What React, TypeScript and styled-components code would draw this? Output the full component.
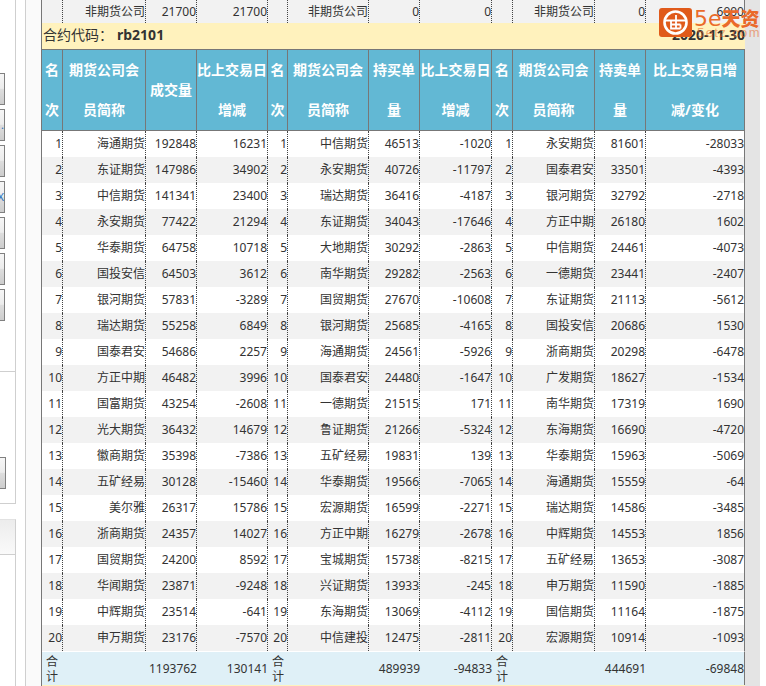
import React from 'react';
import styled, { createGlobalStyle } from 'styled-components';

const GlobalStyle = createGlobalStyle`
  html, body {
    margin: 0;
    padding: 0;
    background: #fff;
    overflow: hidden;
  }
`;

const widths = [21, 83, 51, 71, 20, 81, 51, 72, 21, 82, 51, 99];

const headers = [
  ['名', '次'],
  ['期货公司会', '员简称'],
  ['成交量'],
  ['比上交易日', '增减'],
  ['名', '次'],
  ['期货公司会', '员简称'],
  ['持买单', '量'],
  ['比上交易日', '增减'],
  ['名', '次'],
  ['期货公司会', '员简称'],
  ['持卖单', '量'],
  ['比上交易日增', '减/变化'],
];

const topRow = ['', '非期货公司', '21700', '21700', '', '非期货公司', '0', '0', '', '非期货公司', '0', '6000'];

const rows = [
  '海通期货,192848,16231,中信期货,46513,-1020,永安期货,81601,-28033',
  '东证期货,147986,34902,永安期货,40726,-11797,国泰君安,33501,-4393',
  '中信期货,141341,23400,瑞达期货,36416,-4187,银河期货,32792,-2718',
  '永安期货,77422,21294,东证期货,34043,-17646,方正中期,26180,1602',
  '华泰期货,64758,10718,大地期货,30292,-2863,中信期货,24461,-4073',
  '国投安信,64503,3612,南华期货,29282,-2563,一德期货,23441,-2407',
  '银河期货,57831,-3289,国贸期货,27670,-10608,东证期货,21113,-5612',
  '瑞达期货,55258,6849,银河期货,25685,-4165,国投安信,20686,1530',
  '国泰君安,54686,2257,海通期货,24561,-5926,浙商期货,20298,-6478',
  '方正中期,46482,3996,国泰君安,24480,-1647,广发期货,18627,-1534',
  '国富期货,43254,-2608,一德期货,21515,171,南华期货,17319,1690',
  '光大期货,36432,14679,鲁证期货,21266,-5324,东海期货,16690,-4720',
  '徽商期货,35398,-7386,五矿经易,19831,139,华泰期货,15963,-5069',
  '五矿经易,30128,-15460,华泰期货,19566,-7065,海通期货,15559,-64',
  '美尔雅,26317,15786,宏源期货,16599,-2271,瑞达期货,14586,-3485',
  '浙商期货,24357,14027,方正中期,16279,-2678,中辉期货,14553,1856',
  '国贸期货,24200,8592,宝城期货,15738,-8215,五矿经易,13653,-3087',
  '华闻期货,23871,-9248,兴证期货,13933,-245,申万期货,11590,-1885',
  '中辉期货,23514,-641,东海期货,13069,-4112,国信期货,11164,-1875',
  '申万期货,23176,-7570,中信建投,12475,-2811,宏源期货,10914,-1093',
].map((r) => r.split(','));

const totals = ['合计', '', '1193762', '130141', '合计', '', '489939', '-94833', '合计', '', '444691', '-69848'];

const sideButtons = ['', '.', '', 'X', '', '', ''];

const Page = styled.div`
  position: relative;
  display: flex;
  width: 766px;
  height: 686px;
  overflow: hidden;
  background: #fff;
  font-family: "Noto Sans", "Noto Sans CJK SC", sans-serif;
  font-size: 12px;
  color: #333;
`;

const Sidebar = styled.aside`
  display: flex;
  flex: 0 0 41px;
  height: 100%;
`;

const SideColumn = styled.div`
  display: flex;
  flex-direction: column;
  flex: 0 0 16px;
`;

const Gutter = styled.div`
  flex: 0 0 10px;
  box-sizing: border-box;
  border-right: 1px solid #cfcfcf;
`;

const Stripe = styled.div`
  flex: 1;
  background: #fafafa;
`;

const ButtonStack = styled.div`
  display: flex;
  flex-direction: column;
  gap: 4px;
  box-sizing: border-box;
  height: 372px;
  padding-top: 73px;
  border-right: 1px solid #cfcfcf;
  border-bottom: 1px solid #cfcfcf;
`;

const LowerPanel = styled.div`
  box-sizing: border-box;
  height: 132px;
  padding-top: 85px;
  border-right: 1px solid #cfcfcf;
  border-bottom: 1px solid #cfcfcf;
`;

const SideButton = styled.div<{ $wide?: boolean }>`
  display: flex;
  align-items: center;
  justify-content: flex-end;
  box-sizing: border-box;
  width: ${(p) => (p.$wide ? '6px' : '5px')};
  height: 32px;
  overflow: hidden;
  border: 1px solid #808080;
  border-left: 0;
  background: linear-gradient(#f6f6f6 0%, #ececec 48%, #dedede 50%, #cdcdcd 100%);
  color: #1f6fc0;
  font-size: 11px;
  line-height: 12px;
`;

const SideTab = styled.div`
  box-sizing: border-box;
  height: 36px;
  margin-top: 15px;
  border-right: 1px solid #cfcfcf;
  border-bottom: 1px solid #cfcfcf;
  border-top: 1px solid #e2e2e2;
  background: linear-gradient(#ececec, #fafafa);
`;

const SideRest = styled.div`
  flex: 1;
  border-right: 1px solid #cfcfcf;
`;

const Main = styled.main`
  flex: 0 0 704px;
  box-sizing: border-box;
  height: 100%;
  overflow: hidden;
  border-left: 1px solid #777;
`;

const Scrollbar = styled.div`
  flex: 0 0 15px;
  background: #e4e4e4;
`;

const Table = styled.table`
  width: 703px;
  table-layout: fixed;
  border-collapse: separate;
  border-spacing: 0;
`;

const Row = styled.tr<{ $tone: 'white' | 'grey' }>`
  height: 26px;
  background: ${(p) => (p.$tone === 'grey' ? '#f2f2f2' : '#fff')};
`;

const TopRow = styled.tr`
  height: 23px;
  background: #f2f2f2;
`;

const Cell = styled.td`
  box-sizing: border-box;
  padding: 0;
  border-right: 1px dotted #444;
  text-align: right;
  white-space: nowrap;
  line-height: 16px;

  &:last-child {
    border-right: 1px solid #777;
  }
`;

const TitleRow = styled.tr`
  height: 26px;
  background: #fff2bd;
`;

const TitleCell = styled.td`
  padding: 0;
  font-size: 14px;
  line-height: 20px;
`;

const TitleBar = styled.div`
  display: flex;
  justify-content: space-between;
  padding-left: 1px;
  padding-bottom: 2px;
`;

const Code = styled.b`
  font-weight: 700;
  margin-left: 4px;
`;

const DateLabel = styled.b`
  font-weight: 700;
`;

const HeadCell = styled.th`
  box-sizing: border-box;
  padding: 0;
  height: 82px;
  background: #62b8d4;
  border-top: 1px solid #777;
  border-bottom: 1px solid #777;
  border-right: 1px solid #777;
  color: #fff;
  font-size: 14px;
  font-weight: 700;
  line-height: 40px;
  text-align: center;
  white-space: nowrap;
`;

const TotalRow = styled.tr`
  height: 34px;
  background: #dff0f7;
`;

const TotalCell = styled.td<{ $label?: boolean }>`
  box-sizing: border-box;
  padding: ${(p) => (p.$label ? '1px 0 0 4px' : '0')};
  border-top: 1px solid #fff;
  text-align: ${(p) => (p.$label ? 'left' : 'right')};
  white-space: ${(p) => (p.$label ? 'normal' : 'nowrap')};
  line-height: ${(p) => (p.$label ? '15px' : '16px')};

  &:last-child {
    border-right: 1px solid #777;
  }
`;

const Logo = styled.div`
  position: absolute;
  top: 8px;
  left: 659px;
  display: flex;
  gap: 2px;
`;

const LogoMark = styled.svg`
  display: block;
  width: 33px;
  height: 29px;
`;

const LogoText = styled.div`
  display: flex;
  flex-direction: column;
  color: #ea6a2a;
`;

const LogoName = styled.div`
  display: flex;
  align-items: baseline;
  height: 19px;
  font-family: "DejaVu Sans", sans-serif;
  font-size: 22px;
  line-height: 19px;

  b {
    font-family: "Noto Sans CJK SC", sans-serif;
    font-size: 19px;
    font-weight: 900;
  }
`;

const LogoUrl = styled.div`
  margin-left: 3px;
  font-family: "Liberation Sans", sans-serif;
  font-size: 13px;
  line-height: 11px;
  letter-spacing: 1.4px;
  opacity: 0.55;
`;

const App = () => {
  return (
    <Page>
      <GlobalStyle />
      <Sidebar>
        <SideColumn>
          <ButtonStack>
            {sideButtons.map((glyph, i) => (
              <SideButton key={i}>{glyph}</SideButton>
            ))}
          </ButtonStack>
          <LowerPanel>
            <SideButton $wide />
          </LowerPanel>
          <SideTab />
          <SideRest />
        </SideColumn>
        <Gutter />
        <Stripe />
      </Sidebar>
      <Main>
        <Table>
          <colgroup>
            {widths.map((w, i) => (
              <col key={i} width={w} />
            ))}
          </colgroup>
          <tbody>
            <TopRow>
              {topRow.map((v, i) => (
                <Cell key={i}>{v}</Cell>
              ))}
            </TopRow>
            <TitleRow>
              <TitleCell colSpan={12}>
                <TitleBar>
                  <span>
                    合约代码：
                    <Code>rb2101</Code>
                  </span>
                  <DateLabel>2020-11-30</DateLabel>
                </TitleBar>
              </TitleCell>
            </TitleRow>
            <tr>
              {headers.map((lines, i) => (
                <HeadCell key={i}>
                  {lines.map((line, j) => (
                    <div key={j}>{line}</div>
                  ))}
                </HeadCell>
              ))}
            </tr>
            {rows.map((r, i) => (
              <Row key={i} $tone={i % 2 ? 'grey' : 'white'}>
                <Cell>{i + 1}</Cell>
                <Cell>{r[0]}</Cell>
                <Cell>{r[1]}</Cell>
                <Cell>{r[2]}</Cell>
                <Cell>{i + 1}</Cell>
                <Cell>{r[3]}</Cell>
                <Cell>{r[4]}</Cell>
                <Cell>{r[5]}</Cell>
                <Cell>{i + 1}</Cell>
                <Cell>{r[6]}</Cell>
                <Cell>{r[7]}</Cell>
                <Cell>{r[8]}</Cell>
              </Row>
            ))}
            <TotalRow>
              {totals.map((v, i) => (
                <TotalCell key={i} $label={v === '合计'}>
                  {v}
                </TotalCell>
              ))}
            </TotalRow>
            <TitleRow>
              <TitleCell colSpan={12} />
            </TitleRow>
          </tbody>
        </Table>
      </Main>
      <Scrollbar />
      <Logo>
        <LogoMark viewBox="0 0 33 29">
          <rect width="33" height="29" rx="3" fill="#e05a1a" />
          <circle cx="16.5" cy="14.5" r="11" fill="none" stroke="#fff" strokeWidth="2.6" />
          <path d="M5 12.5h23M12 12.5v8h9.5M12 16.5h9.5M21.5 16.5v4M17 7v13" fill="none" stroke="#fff" strokeWidth="1.8" />
        </LogoMark>
        <LogoText>
          <LogoName>
            5e<b>天资</b>
          </LogoName>
          <LogoUrl>5etz.com</LogoUrl>
        </LogoText>
      </Logo>
    </Page>
  );
};

export default App;
